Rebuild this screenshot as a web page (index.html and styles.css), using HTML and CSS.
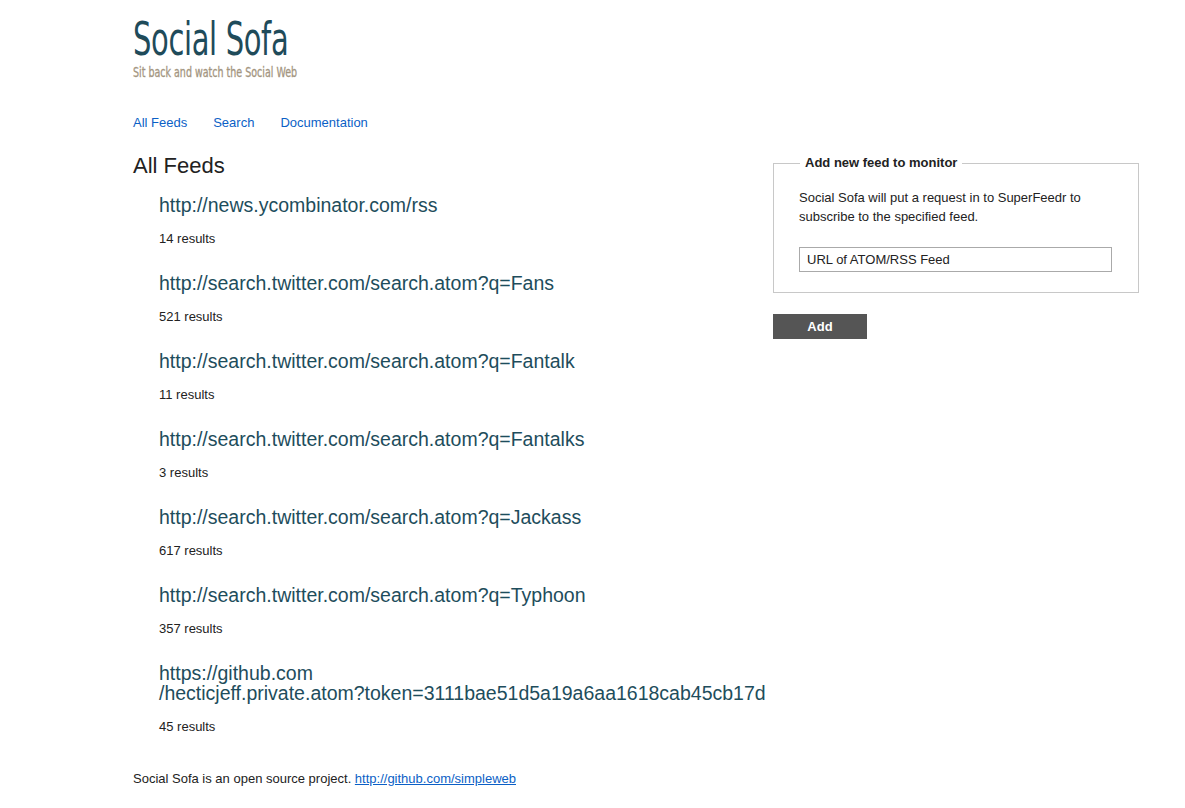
FILE: index.html
```html
<!DOCTYPE html>
<html>
<head>
<meta charset="utf-8">
<title>Social Sofa</title>
<link rel="stylesheet" href="styles.css">
</head>
<body>
<div class="page">
  <header class="header">
    <div class="logo"><span class="logo-text">Social Sofa</span></div>
    <div class="tagline"><span class="tagline-text">Sit back and watch the Social Web</span></div>
  </header>
  <nav class="nav">
    <a href="#">All Feeds</a>
    <a href="#">Search</a>
    <a href="#">Documentation</a>
  </nav>
  <div class="columns">
    <main class="main">
      <h2 class="title">All Feeds</h2>
      <ul class="feeds">
        <li class="feed"><a class="feed-link" href="#">http://news.ycombinator.com/rss</a><div class="count">14 results</div></li>
        <li class="feed"><a class="feed-link" href="#">http://search.twitter.com/search.atom?q=Fans</a><div class="count">521 results</div></li>
        <li class="feed"><a class="feed-link" href="#">http://search.twitter.com/search.atom?q=Fantalk</a><div class="count">11 results</div></li>
        <li class="feed"><a class="feed-link" href="#">http://search.twitter.com/search.atom?q=Fantalks</a><div class="count">3 results</div></li>
        <li class="feed"><a class="feed-link" href="#">http://search.twitter.com/search.atom?q=Jackass</a><div class="count">617 results</div></li>
        <li class="feed"><a class="feed-link" href="#">http://search.twitter.com/search.atom?q=Typhoon</a><div class="count">357 results</div></li>
        <li class="feed"><a class="feed-link" href="#">https://github.com<br>/hecticjeff.private.atom?token=3111bae51d5a19a6aa1618cab45cb17d</a><div class="count">45 results</div></li>
      </ul>
    </main>
    <aside class="side">
      <form class="form">
        <fieldset class="box">
          <legend class="legend">Add new feed to monitor</legend>
          <p class="desc">Social Sofa will put a request in to SuperFeedr to subscribe to the specified feed.</p>
          <input class="input" type="text" value="URL of ATOM/RSS Feed">
        </fieldset>
        <button class="btn" type="button">Add</button>
      </form>
    </aside>
  </div>
  <footer class="footer">Social Sofa is an open source project. <a href="#">http://github.com/simpleweb</a></footer>
</div>
</body>
</html>
```
FILE: styles.css
```css
html, body {
  margin: 0;
  padding: 0;
  background: #fff;
}
body {
  font-family: "Liberation Sans", Arial, sans-serif;
  font-size: 13px;
  color: #222;
}
.page {
  margin-left: 133px;
  width: 1006px;
  padding-top: 14px;
}
.header {
  display: flex;
  flex-direction: column;
}
.logo {
  font-family: "DejaVu Sans Condensed", sans-serif;
  font-size: 46px;
  line-height: 50px;
  color: #1f4b5a;
  height: 50px;
}
.logo-text {
  display: inline-block;
  transform: scaleX(0.70);
  transform-origin: 0 0;
  letter-spacing: -0.5px;
  white-space: nowrap;
}
.tagline {
  font-family: "DejaVu Sans Condensed", sans-serif;
  font-size: 14px;
  line-height: 16px;
  color: #a39580;
  height: 16px;
}
.tagline-text {
  display: inline-block;
  transform: scaleX(0.755);
  transform-origin: 0 0;
  white-space: nowrap;
  -webkit-text-stroke: 0.3px #a39580;
}
.nav {
  display: flex;
  gap: 26px;
  margin-top: 35px;
  line-height: 16px;
}
.nav a {
  color: #0b5fc6;
  text-decoration: none;
}
.columns {
  display: flex;
  margin-top: 22px;
}
.main {
  width: 640px;
}
.title {
  margin: 0;
  font-size: 22px;
  font-weight: normal;
  line-height: 26px;
  color: #222;
}
.feeds {
  list-style: none;
  margin: 0;
  padding: 0 0 0 26px;
}
.feed {
  margin-top: 26px;
}
.feed:first-child {
  margin-top: 16px;
}
.feed-link {
  display: block;
  font-size: 19.5px;
  line-height: 20px;
  color: #1e4d5c;
  text-decoration: none;
  white-space: nowrap;
}
.count {
  margin-top: 16px;
  line-height: 16px;
}
.side {
  width: 366px;
}
.form {
  margin: 0;
}
.box {
  margin: 0;
  margin-top: 2px;
  border: 1px solid #c8c8c8;
  padding: 0 26px 20px 25px;
}
.legend {
  font-weight: bold;
  padding: 0 5px;
  margin-left: 1px;
  line-height: 16px;
}
.desc {
  margin: 17px 0 0 0;
  line-height: 19px;
}
.input {
  display: block;
  box-sizing: border-box;
  width: 313px;
  height: 25px;
  margin-top: 21px;
  border: 1px solid #aaa;
  padding: 0 7px;
  font-family: "Liberation Sans", Arial, sans-serif;
  font-size: 13px;
  color: #222;
}
.btn {
  display: block;
  margin-top: 21px;
  width: 94px;
  height: 25px;
  border: 0;
  background: #555;
  color: #fff;
  font-family: "Liberation Sans", Arial, sans-serif;
  font-weight: bold;
  font-size: 13px;
  padding: 0;
}
.footer {
  margin-top: 36px;
  line-height: 16px;
  padding-bottom: 20px;
}
.footer a {
  color: #0b5fc6;
}
```
